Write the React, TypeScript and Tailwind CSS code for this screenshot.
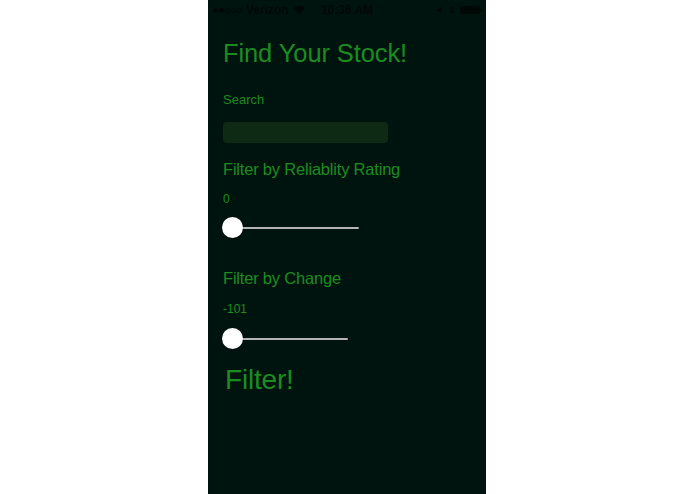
import { useState } from 'react'

const GREEN = 'text-[#1c8c20]'

function Slider({ width }: { width: number }) {
  return (
    <div className="relative h-[22px]" style={{ width }}>
      <div className="absolute left-[10px] right-0 top-[10px] h-[2px] rounded-full bg-[#b5b5b5]" />
      <div className="absolute left-[-1px] top-0 h-[21px] w-[21px] rounded-full bg-white shadow-[0_1px_2px_rgba(0,0,0,0.4)]" />
    </div>
  )
}

function StatusBar() {
  return (
    <div className="relative flex h-5 items-center px-[5px] text-[12px] font-semibold text-[#000805]">
      <div className="flex items-center gap-[1px]">
        {[0, 1, 2, 3, 4].map(i => (
          <span
            key={i}
            className={`h-[5px] w-[5px] rounded-full ${i < 2 ? 'bg-[#000805]' : 'border border-[#000805]'}`}
          />
        ))}
        <span className="ml-[3px]">Verizon</span>
        <svg width="13" height="10" viewBox="0 0 13 10" className="ml-[3px]">
          <path d="M6.5 9.5 L0.5 3 A9 9 0 0 1 12.5 3 Z" fill="#000805" />
        </svg>
      </div>
      <span className="absolute left-1/2 -translate-x-1/2">10:36 AM</span>
      <div className="ml-auto flex items-center gap-[5px]">
        <svg width="9" height="9" viewBox="0 0 9 9">
          <path d="M8.5 0.5 L0.5 4 L4 5 L5 8.5 Z" fill="#000805" />
        </svg>
        <svg width="6" height="10" viewBox="0 0 6 10">
          <path d="M0.5 2.5 L5 7 L3 9 L3 1 L5 3 L0.5 7.5" stroke="#000805" fill="none" strokeWidth="1" />
        </svg>
        <div className="flex items-center">
          <div className="h-[8px] w-[20px] rounded-[2px] bg-[#000805]" />
          <div className="h-[3px] w-[1px] bg-[#000805]" />
        </div>
      </div>
    </div>
  )
}

export default function App() {
  const [query, setQuery] = useState('')

  return (
    <div className="h-[494px] w-full bg-white" style={{ fontFamily: '"Liberation Sans", Arial, sans-serif' }}>
      <div className="ml-[208px] h-full w-[278px] overflow-hidden bg-[#00140f]">
        <StatusBar />
        <div className="pl-[15px]">
          <h1 className={`mt-[18px] text-[25.5px] leading-[30px] tracking-[-0.1px] ${GREEN}`}>Find Your Stock!</h1>

          <p className={`mt-[24px] text-[13px] leading-[16px] ${GREEN}`}>Search</p>
          <input
            value={query}
            onChange={e => setQuery(e.target.value)}
            className="mt-[14px] block h-[21px] w-[165px] rounded-[4px] bg-[#0e2a15] px-2 text-[13px] text-[#1c8c20] outline-none"
          />

          <h2 className={`mt-[16px] text-[16.5px] leading-[20px] tracking-[-0.2px] ${GREEN}`}>Filter by Reliablity Rating</h2>
          <p className={`mt-[13px] text-[12px] leading-[14px] ${GREEN}`}>0</p>
          <div className="mt-[11px]">
            <Slider width={136} />
          </div>

          <h2 className={`mt-[29px] text-[16.5px] leading-[20px] tracking-[-0.2px] ${GREEN}`}>Filter by Change</h2>
          <p className={`mt-[14px] text-[12px] leading-[14px] ${GREEN}`}>-101</p>
          <div className="mt-[12px]">
            <Slider width={125} />
          </div>

          <button className={`ml-[2px] mt-[13px] block text-[28px] leading-[34px] tracking-[-0.2px] ${GREEN}`}>Filter!</button>
        </div>
      </div>
    </div>
  )
}
